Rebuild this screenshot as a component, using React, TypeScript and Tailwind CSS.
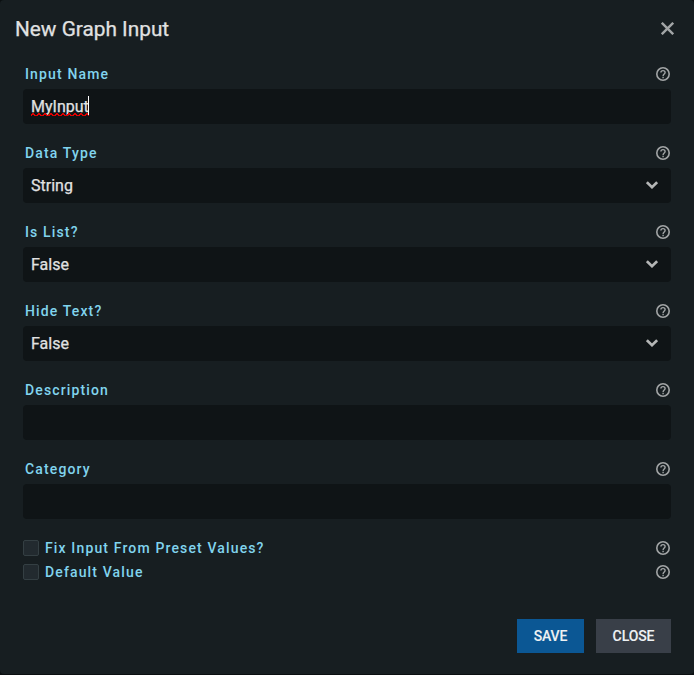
import React from "react";

type Field = { label: string; value?: string; kind: "text" | "select"; focused?: boolean };

const fields: Field[] = [
  { label: "Input Name", value: "MyInput", kind: "text", focused: true },
  { label: "Data Type", value: "String", kind: "select" },
  { label: "Is List?", value: "False", kind: "select" },
  { label: "Hide Text?", value: "False", kind: "select" },
  { label: "Description", kind: "text" },
  { label: "Category", kind: "text" },
];

const options = ["Fix Input From Preset Values?", "Default Value"];

function Label({ children }: { children: React.ReactNode }) {
  return (
    <span className="text-[14px] leading-5 font-medium tracking-[1.14px] text-[#81d4ee]">
      {children}
    </span>
  );
}

function Help() {
  return (
    <svg className="mr-px h-[14px] w-[14px] shrink-0" viewBox="0 0 14 14" fill="none" stroke="#a2a5a6">
      <circle cx="7" cy="7" r="6.2" strokeWidth="1.6" />
      <path d="M4.9 5.6C4.9 4.3 5.8 3.6 7 3.6S9.1 4.4 9.1 5.5C9.1 6.9 7.1 7.1 7.1 8.9" strokeWidth="1.4" />
      <path d="M7.1 9.8V11.2" strokeWidth="1.4" />
    </svg>
  );
}

function CloseIcon() {
  return (
    <svg className="mt-[7.5px] mr-[5px] h-[13px] w-[13px]" viewBox="0 0 13 13" fill="none" stroke="#a2a5a6" strokeWidth="2.4">
      <path d="M0.8 0.8L12.2 12.2M12.2 0.8L0.8 12.2" />
    </svg>
  );
}

function Chevron() {
  return (
    <svg className="mr-[6.5px] mb-px h-[8px] w-[12px]" viewBox="0 0 12 8" fill="none" stroke="#b4b6b6" strokeWidth="2.6">
      <path d="M0.9 1.2L6 6.2L11.1 1.2" />
    </svg>
  );
}

function Squiggle() {
  return (
    <svg className="absolute top-[17px] left-0 h-[3px] w-[58px]" viewBox="0 0 58 3" fill="#e00000" shapeRendering="crispEdges">
      {Array.from({ length: 10 }, (_, i) => (
        <path key={i} d={`M${i * 6 + 1} 0h2v1h1v1h1v1h-2v-1h-2v1h-2v-1h1z`} />
      ))}
    </svg>
  );
}

function FieldRow({ field }: { field: Field }) {
  return (
    <div className="h-[79px]">
      <div className="flex h-[25px] items-start justify-between pl-[2px]">
        <Label>{field.label}</Label>
        <div className="flex h-5 items-center">
          <Help />
        </div>
      </div>
      <div className="flex h-[35px] items-center justify-between rounded-[4px] bg-[#0f1416] pr-[7px] pl-2 text-[16px] leading-[21px] text-[#e1e2e2] [-webkit-text-stroke:0.25px_#e1e2e2]">
        <span className="relative flex items-center">
          {field.value}
          {field.focused && <Squiggle />}
          {field.focused && <span className="absolute top-0 left-[57px] h-[19px] w-px bg-white" />}
        </span>
        {field.kind === "select" && <Chevron />}
      </div>
    </div>
  );
}

export default function App() {
  return (
    <div className="h-[675px] w-[694px] bg-[#0b0f11] font-['Roboto',sans-serif]">
      <div className="flex h-[674px] flex-col rounded-[4px] bg-[#171e21]">
        <header className="flex h-[64px] items-start justify-between pt-[14px] pr-[15px] pl-[15px]">
          <h1 className="text-[20.8px] leading-[30px] text-[#e1e2e2] [-webkit-text-stroke:0.25px_#e1e2e2]">New Graph Input</h1>
          <CloseIcon />
        </header>
        <main className="px-[23px]">
          {fields.map((f) => (
            <FieldRow key={f.label} field={f} />
          ))}
          {options.map((o) => (
            <div key={o} className="flex h-6 items-start justify-between">
              <div className="flex h-5 items-center gap-[6px]">
                <span className="h-4 w-4 rounded-[2px] border border-[#343f43] bg-[#222a2f]" />
                <Label>{o}</Label>
              </div>
              <div className="flex h-5 items-center">
                <Help />
              </div>
            </div>
          ))}
        </main>
        <footer className="mt-[33px] flex justify-end gap-3 pr-[23px] text-[14px] font-medium tracking-[-0.1px] text-[#eef1f3] [-webkit-text-stroke:0.1px_#eef1f3]">
          <button className="h-[34px] w-[67px] bg-[#0b5794]">SAVE</button>
          <button className="h-[34px] w-[75px] bg-[#393f48]">CLOSE</button>
        </footer>
      </div>
    </div>
  );
}
